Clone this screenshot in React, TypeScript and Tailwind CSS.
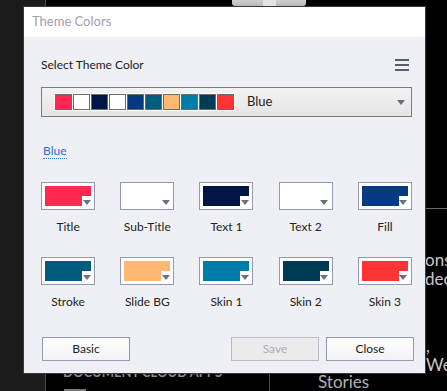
import React from "react"

const colors = [
    { name: "Title", hex: "#ff2851" },
    { name: "Sub-Title", hex: "#ffffff" },
    { name: "Text 1", hex: "#001446" },
    { name: "Text 2", hex: "#ffffff" },
    { name: "Fill", hex: "#053a80" },
    { name: "Stroke", hex: "#005c7e" },
    { name: "Slide BG", hex: "#ffb872" },
    { name: "Skin 1", hex: "#007ca8" },
    { name: "Skin 2", hex: "#003a57" },
    { name: "Skin 3", hex: "#ff3434" },
]

function Arrow({ color = "#6a7089" }: { color?: string }) {
    return (
        <svg width="8" height="5" viewBox="0 0 8 5">
            <path d="M0 0 H8 L4 5 Z" fill={color} />
        </svg>
    )
}

function ColorPicker({ name, hex }: { name: string; hex: string }) {
    return (
        <div className="flex flex-col items-center">
            {/* picker box with notch for the arrow */}
            <div className="relative w-[54px] h-[28px] border border-[#9399ae] bg-white p-[3px]">
                <div className="w-full h-full" style={{ background: hex }} />
                <div className="absolute right-[3px] bottom-[3px] w-[9px] h-[10px] bg-white flex items-center justify-center pt-[2px]">
                    <Arrow />
                </div>
            </div>
            <span className="mt-[9px] text-[12px] leading-[16px] text-[#222]">{name}</span>
        </div>
    )
}

function Button({ label, disabled }: { label: string; disabled?: boolean }) {
    return (
        <button
            className={
                disabled
                    ? "w-[88px] h-[24px] border border-[#b8bcc8] bg-[#ebebeb] text-[12px] text-[#b0b0b0]"
                    : "w-[88px] h-[24px] border border-[#9399ae] bg-gradient-to-b from-white to-[#f2f2f6] text-[12px] text-[#222]"
            }
        >
            {label}
        </button>
    )
}

export default function App() {
    return (
        <div className="relative w-[447px] h-[391px] overflow-hidden bg-black font-['Lato',sans-serif]">
            {/* background page behind the modal */}
            <div className="absolute left-0 top-0 w-[45px] h-full bg-[#1b1b1b]" />
            <div className="absolute left-[45px] top-0 w-px h-full bg-[#4a4a4a]" />
            <div className="absolute left-[232px] top-0 w-[74px] h-[6px] rounded-b-[3px] bg-gradient-to-b from-[#d0d0d0] to-[#b8b8b8] flex justify-center">
                <div className="w-[13px] h-full bg-[#e4e4e4]" />
            </div>
            <div className="absolute left-[425px] top-[208px] w-[22px] h-px bg-[#6a6a6a]" />
            <div className="absolute left-[425px] top-[250px] text-[17px] leading-[19px] text-[#c8c8c8]">ons,</div>
            <div className="absolute left-[425px] top-[269px] text-[17px] leading-[19px] text-[#c8c8c8]">deo</div>
            <div className="absolute left-[426px] top-[336px] text-[17px] leading-[19px] text-[#c8c8c8]">, We</div>
            <div className="absolute left-[269px] top-[373px] w-px h-[20px] bg-[#4a4a4a]" />
            <div className="absolute left-[63px] top-[364px] text-[13px] leading-[16px] font-bold text-[#8a8a8a]">DOCUMENT CLOUD APPS</div>
            <div className="absolute left-[318px] top-[372px] text-[17px] leading-[19px] text-[#b0b0b0]">Stories</div>
            <div className="absolute left-[64px] top-[389px] w-[22px] h-[3px] bg-[#777]" />

            {/* modal dialog */}
            <div className="absolute left-[24px] top-[7px] w-[401px] h-[366px] flex flex-col bg-[#eff0f5] shadow-[0_0_0_1px_#3a3a3a]">
                <div className="h-[30px] bg-white flex items-center pl-[8px] text-[13px] text-[#a0a0b4]">
                    Theme Colors
                </div>

                <div className="flex flex-col pl-[17px] pr-[13px]">
                    <div className="flex items-center justify-between mt-[20px] h-[16px]">
                        <span className="text-[12px] text-[#222]">Select Theme Color</span>
                        <div className="flex flex-col gap-[3px] mr-[3px]">
                            <div className="w-[14px] h-[2px] bg-[#565c70]" />
                            <div className="w-[14px] h-[2px] bg-[#565c70]" />
                            <div className="w-[14px] h-[2px] bg-[#565c70]" />
                        </div>
                    </div>

                    {/* theme dropdown */}
                    <div className="mt-[14px] h-[30px] border border-[#7c7c7c] bg-gradient-to-b from-[#f3f3f3] to-[#e5e5e5] flex items-center pl-[12px] pr-[6px]">
                        <div className="flex gap-px p-px bg-white">
                            {colors.map((c) => (
                                <div key={c.name} className="w-[17px] h-[16px] border border-[#6a6a6a]" style={{ background: c.hex }} />
                            ))}
                        </div>
                        <span className="ml-[12px] text-[13px] text-[#222]">Blue</span>
                        <div className="ml-auto flex items-center">
                            <Arrow />
                        </div>
                    </div>

                    <div className="mt-[20px] ml-[2px]">
                        <span className="text-[12px] leading-[15px] text-[#2d6fd6] border-b border-dotted border-[#2d6fd6]">Blue</span>
                    </div>

                    <div className="mt-[21px] grid grid-cols-5 gap-x-[25px] gap-y-[22px]">
                        {colors.map((c) => (
                            <ColorPicker key={c.name} name={c.name} hex={c.hex} />
                        ))}
                    </div>

                    <div className="mt-[27px] flex ml-px mr-[-2px]">
                        <Button label="Basic" />
                        <div className="ml-auto flex gap-[7px]">
                            <Button label="Save" disabled />
                            <Button label="Close" />
                        </div>
                    </div>
                </div>
            </div>
        </div>
    )
}
